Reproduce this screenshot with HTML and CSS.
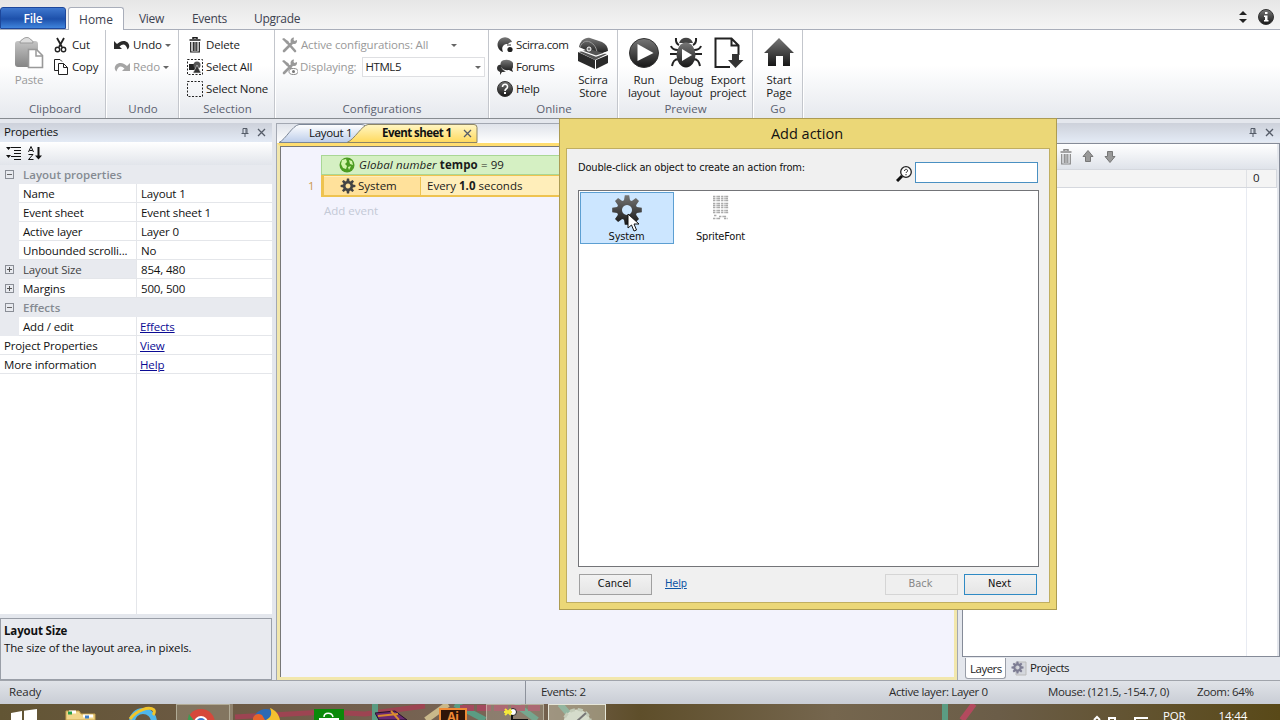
FILE: index.html
```
<!DOCTYPE html>
<html lang="en">

<head>
    <meta charset="UTF-8">
    <meta name="viewport" content="width=device-width, initial-scale=1.0">
    <title>Event sheet 1</title>
    <link rel="stylesheet" href="styles.css">
</head>

<body>
    <!-- shared icons -->
    <svg class="defs" width="0" height="0">
        <defs>
            <linearGradient id="dark" x1="0" y1="0" x2="0" y2="1">
                <stop offset="0" stop-color="#777" />
                <stop offset="1" stop-color="#161616" />
            </linearGradient>
            <linearGradient id="grey" x1="0" y1="0" x2="0" y2="1">
                <stop offset="0" stop-color="#c4c4c4" />
                <stop offset="1" stop-color="#858585" />
            </linearGradient>
            <linearGradient id="tabBlue" x1="0" y1="0" x2="0" y2="1">
                <stop offset="0" stop-color="#fff" />
                <stop offset="1" stop-color="#bccdea" />
            </linearGradient>
            <linearGradient id="tabYellow" x1="0" y1="0" x2="0" y2="1">
                <stop offset="0" stop-color="#fff6c4" />
                <stop offset="1" stop-color="#ffd95c" />
            </linearGradient>
            <symbol id="gear" viewBox="0 0 32 32">
                <path fill-rule="evenodd" d="M13 6.200L13.800 1.200H18.200L19 6.200 20.800 6.950 24.900 4 28 7.100 25.050 11.200 25.800 13 30.800 13.800V18.200L25.800 19 25.050 20.800 28 24.900 24.900 28 20.800 25.050 19 25.800 18.200 30.800H13.800L13 25.800 11.200 25.050 7.100 28 4 24.900 6.950 20.800 6.200 19 1.200 18.200V13.800L6.200 13 6.950 11.200 4 7.100 7.100 4 11.200 6.950ZM16 11a5 5 0 1 0 .01 0z" />
            </symbol>
            <symbol id="trash" viewBox="0 0 12 16">
                <path d="M4 2V.7h4V2M.5 3h11" fill="none" stroke="currentColor" stroke-width="1.5" />
                <path d="M1.700 5v10h8.600V5M4.300 5v9M6 5v9M7.800 5v9" fill="none" stroke="currentColor" stroke-width="1.200" />
            </symbol>
            <symbol id="tools" viewBox="0 0 16 16">
                <path d="M2 14L11 5M5 5l8 9" stroke="#999" stroke-width="2.600" stroke-linecap="round" />
                <path d="M15 3a3.300 3.300 0 1 1-3-2.500L11.500 3l1 1zM0 2l2-1 5 4-2 2z" fill="#999" />
            </symbol>
            <symbol id="pin" viewBox="0 0 8 9">
                <path d="M2 .5h4v5H2zM5 .5v5M.5 5.500h7M4 6v3" fill="none" stroke="#555c68" />
            </symbol>
            <symbol id="close" viewBox="0 0 9 9">
                <path d="M1 1l7 7M8 1L1 8" stroke="#555c68" stroke-width="1.300" />
            </symbol>
        </defs>
    </svg>

    <nav class="tabs">
        <span class="tabs__item tabs__item--file">File</span>
        <span class="tabs__item tabs__item--active">Home</span>
        <span class="tabs__item tabs__item--view">View</span>
        <span class="tabs__item tabs__item--events">Events</span>
        <span class="tabs__item">Upgrade</span>
        <div class="tabs__tools">
            <svg width="8" height="12"><path d="M0 4L4 0l4 4zM0 8l4 4 4-4z" fill="#222" /></svg>
            <svg width="16" height="16"><circle cx="8" cy="8" r="7.500" fill="url(#dark)" stroke="#333" /><path d="M7 3h2.500v2H7zM6 6.500h3.500V11h1v1.500H6V11h1V8H6z" fill="#fff" /></svg>
        </div>
    </nav>

    <header class="ribbon">
        <section class="group group--clipboard">
            <div class="group__body">
                <div class="big big--paste">
                    <svg width="30" height="32">
                        <rect x="1" y="4" width="23" height="26" rx="3" fill="url(#grey)" />
                        <path d="M6 6c0-3 2-3 3-4 2-2 6-2 7 0 1 1 3 1 3 4z" fill="#ddd" stroke="#999" />
                        <path d="M14.500 12.500h8l6 6v12h-14z" fill="#fff" stroke="#999" stroke-width="1.600" />
                        <path d="M22 13v6h6" fill="none" stroke="#999" stroke-width="1.500" />
                    </svg>
                    <span>Paste</span>
                </div>
                <div class="stack">
                    <div class="small">
                        <svg width="16" height="16"><path d="M4 1l5 9M11 1L6 10" stroke="#222" stroke-width="1.800" /><g fill="none" stroke="#222" stroke-width="1.400"><circle cx="4.500" cy="12.500" r="2.200" /><circle cx="10.500" cy="12.500" r="2.200" /></g></svg>
                        <span>Cut</span>
                    </div>
                    <div class="small">
                        <svg width="16" height="16"><path d="M1.500 11.500v-11H7l2 2M1.500 11.500H5" fill="none" stroke="#222" /><path d="M5.500 4.500h5l4 4v7h-9zM10.500 4.500v4h4" fill="#fff" stroke="#222" /></svg>
                        <span>Copy</span>
                    </div>
                </div>
            </div>
            <div class="group__caption">Clipboard</div>
        </section>

        <section class="group group--undo">
            <div class="group__body">
                <div class="stack">
                    <div class="small">
                        <svg width="16" height="12"><path d="M0 2v8h8L5.500 7.500C9 4 12 5 13.500 10.500 17 8 15 2 9.500 2 7 2 4.500 3.500 3 5z" fill="#2a2a2a" /></svg>
                        <span>Undo</span><i class="arrow"></i>
                    </div>
                    <div class="small small--off">
                        <svg width="16" height="12"><path d="M16 2v8H8l2.500-2.500C7 4 4 5 2.500 10.500-1 8 1 2 6.500 2 9 2 11.500 3.500 13 5z" fill="#a5a5a5" /></svg>
                        <span>Redo</span><i class="arrow"></i>
                    </div>
                </div>
            </div>
            <div class="group__caption">Undo</div>
        </section>

        <section class="group group--selection">
            <div class="group__body">
                <div class="stack">
                    <div class="small">
                        <svg width="16" height="16"><use href="#trash" x="2" width="12" height="16" /></svg>
                        <span>Delete</span>
                    </div>
                    <div class="small">
                        <svg width="16" height="16"><path d="M.5.5h15v15H.5z" fill="none" stroke="#222" stroke-dasharray="2 1.500" /><path d="M2 5h6v6H2z" fill="#222" /><circle cx="10" cy="6" r="3.500" fill="#555" /><path d="M10 6l4 8H6z" fill="#333" stroke="#ddd" stroke-width=".6" /></svg>
                        <span>Select All</span>
                    </div>
                    <div class="small">
                        <svg width="16" height="16"><path d="M.5.5h15v15H.5z" fill="none" stroke="#222" stroke-dasharray="2 1.500" /></svg>
                        <span>Select None</span>
                    </div>
                </div>
            </div>
            <div class="group__caption">Selection</div>
        </section>

        <section class="group group--config">
            <div class="group__body">
                <div class="stack">
                    <div class="small small--off">
                        <svg width="16" height="16"><use href="#tools" /></svg>
                        <span>Active configurations: All</span><i class="arrow arrow--config"></i>
                    </div>
                    <div class="small small--off small--display">
                        <svg width="16" height="16"><use href="#tools" /><ellipse cx="11.500" cy="12.500" rx="4.500" ry="3" fill="#fff" stroke="#888" /><circle cx="11.500" cy="12.500" r="1.500" fill="#777" /></svg>
                        <span>Displaying:</span>
                        <div class="combo"><span>HTML5</span><i class="arrow"></i></div>
                    </div>
                </div>
            </div>
            <div class="group__caption">Configurations</div>
        </section>

        <section class="group group--online">
            <div class="group__body">
                <div class="stack">
                    <div class="small">
                        <svg width="16" height="16"><path d="M15 5A7.500 7.500 0 1 0 6 15c-2-4 0-8 4-8 2 0 2-2 5-2z" fill="url(#dark)" /><circle cx="13" cy="12.500" r="2.600" fill="#222" /><path d="M14 8H10" stroke="#333" /></svg>
                        <span>Scirra.com</span>
                    </div>
                    <div class="small">
                        <svg width="16" height="16"><path d="M4 3c2-3 10-3 12 1 1 4-1 6-1 6l1 3-4-2c-6 1-10-3-8-8z" fill="url(#dark)" /><path d="M0 9c0-3 3-4 4-3 0 4 3 6 5 6-1 1-3 1-4 1l-2 3v-3c-2-1-3-2-3-4z" fill="#333" /></svg>
                        <span>Forums</span>
                    </div>
                    <div class="small">
                        <svg width="16" height="16"><circle cx="8" cy="8" r="7.500" fill="url(#dark)" stroke="#333" /><path d="M5.500 6c0-4 5.500-3.500 5 0 0 2-2.500 1.500-2.500 4" fill="none" stroke="#fff" stroke-width="1.600" /><path d="M7 11h2v2H7z" fill="#fff" /></svg>
                        <span>Help</span>
                    </div>
                </div>
                <div class="big big--store">
                    <svg width="32" height="32"><path d="M2 10C3 4 8 0 13 1l12 4c4 2 6 5 6 9l-11 4z" fill="url(#dark)" /><path d="M3 10C5 5 9 3 13 5c4 2 7 6 7 12" fill="none" stroke="#999" /><path d="M1 15l17 8v9L1 24zM31 18v8l-12 6v-9z" fill="#2a2a2a" /><path d="M2 15l10-3 18 5-12 6z" fill="#555" /><path d="M1 12.500l18 6.500 12-4" fill="none" stroke="#fff" stroke-width="1.300" /><circle cx="12" cy="12" r="2" fill="#777" stroke="#fff" /></svg>
                    <span>Scirra<br>Store</span>
                </div>
            </div>
            <div class="group__caption">Online</div>
        </section>

        <section class="group group--preview">
            <div class="group__body">
                <div class="big">
                    <svg width="32" height="32"><circle cx="16" cy="16" r="14.500" fill="url(#dark)" stroke="#333" /><path d="M9.500 7l16 9-16 8z" fill="#fff" /></svg>
                    <span>Run<br>layout</span>
                </div>
                <div class="big">
                    <svg width="32" height="32"><path d="M9 8C5 6 6 3 6 1M23 8c4-2 3-5 3-7M8 13c-4 0-6-1-7-4M24 13c4 0 6-1 7-4M8 17H0M24 17h8M9 22c-5 0-6 3-7 7M23 22c5 0 6 3 7 7" fill="none" stroke="#222" stroke-width="2" /><path d="M9 6c2-7 12-7 14 0z" fill="#444" /><ellipse cx="16" cy="18" rx="9.500" ry="12.500" fill="url(#dark)" /><path d="M12 12l10 6-10 6z" fill="#fff" /></svg>
                    <span>Debug<br>layout</span>
                </div>
                <div class="big">
                    <svg width="32" height="32"><path d="M18 30H3.500V1.500h16l7 7V18M19.500 2v6.500h7" fill="none" stroke="#222" stroke-width="2" /><path d="M20 17h7v6h4.500L23.500 31 16 23h4z" fill="#333" /></svg>
                    <span>Export<br>project</span>
                </div>
            </div>
            <div class="group__caption">Preview</div>
        </section>

        <section class="group group--go">
            <div class="group__body">
                <div class="big">
                    <svg width="32" height="32"><path d="M16 1l15 15h-4v13h-7V19h-7v10H5V16H1z" fill="url(#dark)" /></svg>
                    <span>Start<br>Page</span>
                </div>
            </div>
            <div class="group__caption">Go</div>
        </section>
    </header>

    <main class="workspace">
        <aside class="properties">
            <div class="panel-title">
                <span>Properties</span>
                <svg width="8" height="9"><use href="#pin" /></svg>
                <svg width="9" height="9"><use href="#close" /></svg>
            </div>
            <div class="properties__toolbar">
                <svg width="15" height="15"><path d="M0 1h5L2.500 4zM0 9h5l-2.500 3z" fill="#111" /><path d="M5 1.500h10M8 4.500h7M8 7.500h7M5 10.500h10M8 13.500h7" stroke="#111" /></svg>
                <svg width="14" height="15"><path d="M.5 6L3 .5 5.500 6M1.500 4.500h3M.5 8.500h4.500l-4.500 5h5" fill="none" stroke="#111" /><path d="M10.500 1v11" stroke="#111" stroke-width="2" /><path d="M7 9.500h7l-3.500 4z" fill="#111" /></svg>
            </div>
            <div class="grid">
                <div class="grid__head"><i class="toggle"></i>Layout properties</div>
                <div class="grid__row"><i></i><span>Name</span><b>Layout 1</b></div>
                <div class="grid__row"><i></i><span>Event sheet</span><b>Event sheet 1</b></div>
                <div class="grid__row"><i></i><span>Active layer</span><b>Layer 0</b></div>
                <div class="grid__row"><i></i><span>Unbounded scrolli...</span><b>No</b></div>
                <div class="grid__row grid__row--selected"><i class="toggle toggle--plus"></i><span>Layout Size</span><b>854, 480</b></div>
                <div class="grid__row"><i class="toggle toggle--plus"></i><span>Margins</span><b>500, 500</b></div>
                <div class="grid__head"><i class="toggle"></i>Effects</div>
                <div class="grid__row"><i></i><span>Add / edit</span><a>Effects</a></div>
                <div class="grid__row grid__row--wide"><span>Project Properties</span><a>View</a></div>
                <div class="grid__row grid__row--wide"><span>More information</span><a>Help</a></div>
                <div class="grid__rest"></div>
            </div>
            <div class="description">
                <strong>Layout Size</strong>
                <p>The size of the layout area, in pixels.</p>
            </div>
        </aside>

        <section class="editor">
            <div class="editor__tabs">
                <div class="doc-tab">
                    <svg class="doc-tab__shape" width="92" height="19"><path d="M1 18.500C8 15 14 2 21 .5h62c4 0 5 2 7 5v13z" fill="url(#tabBlue)" stroke="#7c8798" /></svg>
                    <span>Layout 1</span>
                </div>
                <div class="doc-tab doc-tab--active">
                    <svg class="doc-tab__shape" width="131" height="19"><path d="M0 18.500C8 15 14 2 21 .5h106q3 0 3 3v15z" fill="url(#tabYellow)" stroke="#8c8566" /></svg>
                    <span>Event sheet 1</span>
                    <svg width="9" height="9"><use href="#close" /></svg>
                </div>
            </div>
            <div class="sheet">
                <div class="event event--global">
                    <svg width="16" height="16"><circle cx="8" cy="8" r="7.500" fill="#4c9c22" /><path d="M3 3l4-1 1 3-2 2 2 2-1 3-3-1-2-4zM10 3l3 1 1 4-3-1zM9 10l3-1-2 4z" fill="#d3f5ac" /></svg>
                    <span><em>Global number</em> <strong>tempo</strong> = 99</span>
                </div>
                <div class="event-line">
                    <span class="event-line__number">1</span>
                    <div class="event event--system">
                        <div class="event__object">
                            <svg width="16" height="16" fill="#444"><use href="#gear" /></svg>
                            <span>System</span>
                        </div>
                        <div class="event__text">Every <strong>1.0</strong> seconds</div>
                    </div>
                </div>
                <div class="add-event">Add event</div>
            </div>
        </section>

        <aside class="layers">
            <div class="panel-title">
                <span></span>
                <svg width="8" height="9"><use href="#pin" /></svg>
                <svg width="9" height="9"><use href="#close" /></svg>
            </div>
            <div class="layers__box">
                <div class="layers__toolbar">
                    <svg class="layers__trash" width="12" height="16"><use href="#trash" /></svg>
                    <svg width="12" height="13"><path d="M6 .5L11 6.500H8.500v5h-5v-5H1z" fill="#999" stroke="#777" /></svg>
                    <svg width="12" height="13"><path d="M6 12.500L1 6.500h2.500v-5h5v5H11z" fill="#999" stroke="#777" /></svg>
                </div>
                <div class="layers__row"><span>0</span></div>
                <div class="layers__rest"></div>
            </div>
            <div class="layers__tabs">
                <span class="layers__tab">Layers</span>
                <svg width="16" height="16"><path d="M5 2h10v13H5z" fill="#d4d7dd" stroke="#bbb" /><use href="#gear" y="1" width="13" height="13" fill="#7d7d94" /></svg>
                <span>Projects</span>
            </div>
        </aside>
    </main>

    <footer class="status">
        <span class="status__ready">Ready</span>
        <span class="status__events">Events: 2</span>
        <span class="status__layer">Active layer: Layer 0</span>
        <span class="status__mouse">Mouse: (121.5, -154.7, 0)</span>
        <span class="status__zoom">Zoom: 64%</span>
    </footer>

    <div class="taskbar">
        <svg class="taskbar__art" width="1280" height="16">
            <path d="M235 13l90-5 40 2 60-8" fill="none" stroke="#9d4452" stroke-width="5" />
            <path d="M455 0l30 16M375 0v16M945 0v16M515 0l22 16M560 0l14 16" stroke="#5b9c83" stroke-width="6" />
            <path d="M448 0l-22 16" stroke="#c9b88a" stroke-width="6" />
            <path d="M460 4h80" stroke="#a34a5e" stroke-width="6" stroke-dasharray="14 3" />
            <path d="M974 0l-12 16" stroke="#b34a5e" stroke-width="6" />
        </svg>
        <div class="task task--start"><svg width="28" height="16"><path d="M0 9l11-2v9H0zM13 6.700L26 5v11H13z" fill="#fff" /></svg></div>
        <div class="task"><svg width="32" height="16"><path d="M1 7h13l2 3h14v6H1z" fill="#f1d58a" stroke="#c9a44e" /><path d="M4 8h7M18 12h10" stroke="#fff" stroke-width="3" /><path d="M3 9h4" stroke="#2a9d46" stroke-width="3" /><path d="M20 13h4" stroke="#3f7fc8" stroke-width="3" /></svg></div>
        <div class="task"><svg width="32" height="16"><path d="M5 18a11 11 0 0 1 22 0" fill="none" stroke="#4fb7ea" stroke-width="6" /><path d="M3 15C10 6 22 2 27 6c1 1 0 4-1 5" fill="none" stroke="#f1c52a" stroke-width="3" /></svg></div>
        <div class="task task--open task--group"><svg width="32" height="16"><circle cx="14" cy="18" r="14" fill="#d6483b" /><path d="M2 9l6 8H0z" fill="#3e9b54" /><circle cx="14" cy="18" r="7" fill="#fff" /><circle cx="14" cy="18" r="5" fill="#3f78d0" /></svg></div>
        <div class="task"><svg width="32" height="16"><circle cx="15" cy="18" r="13" fill="#2d6ab4" /><path d="M19 4c5 2 9 6 10 12H15c6-3 6-7 4-12z" fill="#f5c12f" /><path d="M2 14c2-4 5-5 9-3l3 5H2z" fill="#e8632a" /></svg></div>
        <div class="task"><svg width="30" height="16"><path d="M0 5h30v11H0z" fill="#0a8a0a" /><path d="M5 14h20v2H5z" fill="#fff" /><path d="M10 13c0-5 8-5 9 0" fill="none" stroke="#fff" stroke-width="1.500" /></svg></div>
        <div class="task"><svg width="32" height="16"><path d="M0 9l20-2 12 9H4z" fill="#6a2a72" stroke="#26102a" /><path d="M3 12l20-2M16 7l8 9" stroke="#d98b2f" stroke-width="2" /></svg></div>
        <div class="task"><div class="task__ai">Ai</div></div>
        <div class="task task--open"><svg width="32" height="16"><circle cx="14" cy="7" r="3.500" fill="#fff" stroke="#222" /><path d="M6 4l6 6M6 10l6-6M5 7h8" stroke="#f6e93a" stroke-width="2" /><path d="M13 10v5h16" fill="none" stroke="#111" stroke-width="2" /></svg></div>
        <div class="task task--open task--current"><svg width="32" height="16" fill="#d5dccb"><circle cx="16" cy="18" r="13.500" stroke="#c3cbb8" stroke-width="3" stroke-dasharray="5 3" /><path d="M15 17l10-9" stroke="#777" stroke-width="2" /></svg></div>
        <div class="tray">
            <svg width="60" height="16"><path d="M6 16l3-3 3 3M21 16v-2h6v2M47 16v-2h13" fill="none" stroke="#fff" stroke-width="2" /></svg>
            <span>POR</span>
            <span class="tray__time">14:44</span>
        </div>
    </div>

    <div class="dialog">
        <div class="dialog__title">Add action</div>
        <div class="dialog__body">
            <div class="dialog__top">
                <span>Double-click an object to create an action from:</span>
                <svg width="16" height="16"><circle cx="10" cy="6" r="5.300" fill="#fff" stroke="#222" stroke-width="1.300" /><path d="M6 10l-5 5" stroke="#111" stroke-width="3" /><path d="M8.500 5c0-2.500 3.500-2 3 0 0 1-1.500 1-1.500 2M10 8v1.300" fill="none" stroke="#222" /></svg>
                <input class="dialog__search" type="text">
            </div>
            <div class="objects">
                <div class="object object--selected">
                    <svg width="32" height="32" fill="url(#dark)"><use href="#gear" /></svg>
                    <span>System</span>
                    <svg class="cursor" width="13" height="19"><path d="M1 1v14l3.500-3 2.500 6 2.500-1-2.500-6h5z" fill="#fff" stroke="#111" /></svg>
                </div>
                <div class="object">
                    <svg width="32" height="32"><path d="M8 2.500h16M8 4.500h15M8 6.500h16M8 9.500h16M8 11.500h15M8 13.500h16M8 16.500h15M8 18.500h16M9 21.500h3M14 22.500h8M8 24.500h8M19 24.500h4" stroke="#aaa" stroke-width="1.500" stroke-dasharray="2 .6 1 .5 3 1" /></svg>
                    <span>SpriteFont</span>
                </div>
            </div>
            <div class="dialog__buttons">
                <button class="button">Cancel</button>
                <a class="dialog__help">Help</a>
                <button class="button button--back" disabled>Back</button>
                <button class="button button--default">Next</button>
            </div>
        </div>
    </div>
</body>

</html>
```

FILE: styles.css
```
:root {
    --color-chrome: #e4e7ed;
    --color-line: #8f949e;
    --color-text: #1b1b1b;
    --color-muted: #999;
    --color-dialog: #ebd777;
}

* {
    box-sizing: border-box;
}

body {
    position: relative;
    display: flex;
    flex-direction: column;
    width: 1280px;
    height: 720px;
    margin: 0;
    overflow: hidden;
    background-color: var(--color-chrome);
    color: var(--color-text);
    font-family: "Open Sans", "Noto Sans", sans-serif;
    font-size: 11.5px;
    line-height: 16px;
    letter-spacing: -0.15px;
    white-space: nowrap;
}

svg {
    display: block;
    flex: none;
}

.defs {
    position: absolute;
}

/* ribbon tabs */
.tabs {
    display: flex;
    flex: none;
    height: 30px;
    padding-top: 7px;
    background: linear-gradient(#e6e6e6, #f5f5f5);
    border-bottom: 1px solid #a9aeba;
    color: #3d4250;
    font-size: 12px;
    letter-spacing: -0.3px;
}

.tabs__item {
    height: 23px;
    line-height: 24px;
}

.tabs__item--file {
    width: 66px;
    height: 22px;
    margin-right: 2px;
    line-height: 21px;
    text-align: center;
    color: #fff;
    font-weight: 600;
    background: linear-gradient(#3f78cf, #1d50aa 55%, #3f84dc);
    border: 1px solid #1d479b;
    border-radius: 3px 3px 0 0;
}

.tabs__item--active {
    width: 56px;
    text-align: center;
    background-color: #fff;
    border: 1px solid #a9aeba;
    border-bottom: 0;
    border-radius: 3px 3px 0 0;
    line-height: 23px;
    letter-spacing: 0;
}

.tabs__item--view {
    width: 53px;
    padding-left: 15px;
}

.tabs__item--events {
    width: 77px;
    padding-left: 15px;
}

.tabs__tools {
    display: flex;
    align-items: center;
    gap: 11px;
    height: 20px;
    margin-left: auto;
    padding-right: 6px;
}

/* ribbon */
.ribbon {
    display: flex;
    flex: none;
    height: 89px;
    background: linear-gradient(#fff 40%, #e6e9ee);
    border-bottom: 1px solid #868b90;
}

.group {
    display: flex;
    flex-direction: column;
    padding-top: 4px;
    border-right: 1px solid #c3c6cc;
    box-shadow: 1px 0 #fff;
}

.group__body {
    display: flex;
    height: 66px;
}

.group__caption {
    text-align: center;
    color: #5b6170;
    line-height: 18px;
    letter-spacing: 0;
}

.group--clipboard { width: 106px; padding-left: 5px; }
.group--undo { width: 73px; padding-left: 8px; }
.group--selection { width: 96px; padding-left: 8px; }
.group--config { width: 214px; padding-left: 7px; }
.group--online { width: 129px; padding-left: 8px; }
.group--preview { width: 135px; padding-left: 5px; }
.group--go { width: 50px; padding-left: 5px; }

.group--undo .group__caption,
.group--selection .group__caption,
.group--config .group__caption,
.group--online .group__caption {
    margin-left: -6px;
}

.group--preview .group__caption,
.group--go .group__caption {
    margin-left: -4px;
}

.small {
    display: flex;
    align-items: center;
    gap: 3px;
    height: 22px;
}

.group--online .small {
    letter-spacing: -0.4px;
}

.small--off,
.big--paste {
    color: var(--color-muted);
}

.big {
    display: flex;
    flex-direction: column;
    align-items: center;
    width: 42px;
    padding-top: 3px;
    text-align: center;
    line-height: 13px;
}

.big span {
    padding-top: 4px;
}

.big--paste {
    width: 48px;
}

.big--store {
    width: 44px;
    margin-left: auto;
    margin-right: 2px;
}

.arrow {
    border: 3px solid transparent;
    border-top-color: #666;
    border-bottom: 0;
}

.arrow--config {
    margin-left: 20px;
}

.small--display {
    gap: 2px;
}

.combo {
    display: flex;
    align-items: center;
    justify-content: space-between;
    width: 123px;
    height: 20px;
    margin-left: 4px;
    padding: 0 3px 0 2px;
    border: 1px solid #dedfe2;
    background-color: #fff;
    color: #222;
    letter-spacing: -0.4px;
}

/* workspace */
.workspace {
    display: grid;
    grid-template-columns: 272px 682px 318px;
    grid-template-rows: 100%;
    column-gap: 4px;
    flex: none;
    height: 561px;
    padding-top: 4px;
}

.panel-title {
    display: flex;
    align-items: center;
    gap: 8px;
    flex: none;
    height: 19px;
    padding: 0 6px 1px 4px;
    background: linear-gradient(#cdd1da, #e3eaf5);
}

.panel-title span {
    flex: 1;
}

.properties {
    display: flex;
    flex-direction: column;
    min-height: 0;
    color: #111;
}

.properties__toolbar {
    display: flex;
    align-items: center;
    gap: 7px;
    flex: none;
    height: 23px;
    padding-left: 6px;
    background: linear-gradient(#fff, #e2e5eb);
}

.grid {
    display: flex;
    flex-direction: column;
    flex: 1;
}

.grid__head {
    display: flex;
    align-items: center;
    height: 19px;
    background-color: #e8eaef;
    color: #858a92;
    font-weight: 600;
    letter-spacing: 0;
}

.grid__row {
    display: grid;
    grid-template-columns: 19px 117px 1fr;
    height: 19px;
    background-color: #e8eaef;
    line-height: 20px;
}

.grid__row > i {
    height: 18px;
}

.grid__row span,
.grid__row b,
.grid__row a {
    height: 19px;
    padding-left: 4px;
    background-color: #fff;
    border-bottom: 1px solid #e4e6ea;
    font-weight: normal;
}

.grid__row b,
.grid__row a {
    border-left: 1px solid #e4e6ea;
}

.grid__row a {
    padding-left: 3px;
    color: #0b0b94;
    text-decoration: underline;
}

.grid__row--wide {
    grid-template-columns: 136px 1fr;
}

.grid__row--selected span {
    background-color: #e8eaef;
    color: #444;
}

.toggle {
    width: 9px;
    height: 9px;
    margin: 0 9px 0 5px;
    background: linear-gradient(#666, #666) center / 5px 1px no-repeat;
    border: 1px solid #8a8e96;
}

.grid__row > .toggle {
    height: 9px;
    margin-top: 5px;
}

.toggle--plus {
    background: linear-gradient(#555, #555) center / 5px 1px no-repeat, linear-gradient(#555, #555) center / 1px 5px no-repeat;
}

.grid__rest {
    flex: 1;
    background: linear-gradient(90deg, #fff 136px, #e4e6ea 136px, #e4e6ea 137px, #fff 137px);
}

.description {
    height: 62px;
    margin-top: 4px;
    padding: 3px;
    background-color: #e8eaef;
    border: 1px solid #9a9fa8;
    line-height: 17px;
}

.description p {
    margin: 0;
}

/* editor */
.editor {
    display: flex;
    flex-direction: column;
    min-height: 0;
    border: 1px solid #a3a8b2;
    border-bottom: 0;
}

.editor__tabs {
    display: flex;
    flex: none;
    height: 19px;
    padding-left: 1px;
    background: linear-gradient(#dfe3ea, #fff);
}

.doc-tab {
    position: relative;
    display: flex;
    align-items: center;
    width: 69px;
    height: 19px;
    padding: 0 0 1px 31px;
    color: #111;
    letter-spacing: -0.3px;
}

.doc-tab__shape {
    position: absolute;
    top: 0;
    left: 0;
}

.doc-tab span,
.doc-tab__shape + span + svg {
    position: relative;
}

.doc-tab--active {
    width: 131px;
    padding-left: 35px;
    gap: 11px;
    font-weight: 700;
    letter-spacing: -0.55px;
}

.sheet {
    flex: 1;
    padding: 9px 0 0 40px;
    background-color: #f3f3fd;
    border: 3px solid #f2e7ad;
    border-top-color: #ffdd70;
    box-shadow: inset 1px 1px #777;
    letter-spacing: 0;
}

.event {
    display: flex;
    align-items: center;
}

.event--global {
    height: 20px;
    margin-left: 1px;
    padding-left: 17px;
    gap: 4px;
    background-color: #d5f0c3;
    border: 1px solid #a9d795;
    letter-spacing: 0.1px;
}

.event-line {
    position: relative;
    height: 22px;
    padding-left: 1px;
}

.event-line__number {
    position: absolute;
    left: -12px;
    line-height: 22px;
    color: #cc9a4c;
}

.event--system {
    height: 22px;
    background-color: #ffeeba;
    border: 1px solid #eec350;
    border-left-width: 3px;
    border-bottom-width: 2px;
}

.event__object {
    display: flex;
    align-items: center;
    gap: 2px;
    width: 97px;
    height: 18px;
    padding-left: 16px;
    background-color: #ffe19b;
    border-right: 1px solid #eec350;
}

.event__text {
    padding-left: 6px;
}

.add-event {
    padding: 6px 0 0 4px;
    color: #c3c9d6;
}

/* layers */
.layers {
    display: flex;
    flex-direction: column;
    min-height: 0;
}

.layers__box {
    display: flex;
    flex: 1;
    flex-direction: column;
    margin-top: 1px;
    padding-right: 2px;
    border: 1px solid #858b98;
}

.layers__toolbar {
    display: flex;
    align-items: center;
    gap: 10px;
    height: 25px;
    padding-left: 97px;
    background: linear-gradient(#fff, #dfe3ea);
}

.layers__trash {
    color: #888;
}

.layers__row {
    display: flex;
    justify-content: flex-end;
    height: 19px;
    background-color: #f4f4f4;
    border: 1px solid #d5d8de;
}

.layers__row span {
    width: 30px;
    padding-left: 6px;
    border-left: 1px solid #dfe1e5;
}

.layers__rest {
    flex: 1;
    background: linear-gradient(270deg, #fff 30px, #e8ebf2 30px, #e8ebf2 31px, #fff 31px);
}

.layers__tabs {
    display: flex;
    align-items: center;
    gap: 3px;
    height: 23px;
    padding: 0 0 1px 3px;
    letter-spacing: -0.5px;
}

.layers__tab {
    width: 41px;
    height: 21px;
    margin-right: 2px;
    padding: 0 0 0 4px;
    background-color: #fff;
    border: 1px solid #999ea8;
    border-top: 0;
    border-radius: 0 0 3px 3px;
    line-height: 22px;
}

/* status bar */
.status {
    display: flex;
    flex: none;
    height: 24px;
    border-top: 1px solid #a0a4ab;
    background: linear-gradient(#e0e3e8, #c9cdd5);
    line-height: 21px;
    letter-spacing: -0.35px;
    color: #2b2b2b;
}

.status__ready {
    width: 526px;
    padding-left: 9px;
    border-right: 1px solid #8d929c;
    letter-spacing: -0.1px;
}

.status__events { width: 363px; padding-left: 15px; }
.status__layer { width: 159px; }
.status__mouse { width: 149px; }

/* taskbar */
.taskbar {
    position: relative;
    display: flex;
    flex: none;
    height: 16px;
    overflow: hidden;
    background: linear-gradient(90deg, #625534, #6b5942 15%, #7a6658 40%, #5e4e2a 50%, #75664e 65%, #6b5d48 78%, #594918);
}

.taskbar__art {
    position: absolute;
    top: 0;
    left: 0;
}

.task {
    position: relative;
    display: flex;
    justify-content: center;
    width: 58px;
    height: 18px;
    margin: 0 2px;
}

.task--start {
    width: 46px;
}

.task--open {
    background-color: rgba(200, 200, 180, 0.25);
    border: 1px solid rgba(225, 225, 205, 0.5);
}

.task--group {
    width: 54px;
    margin: 0 6px 0 2px;
    box-shadow: 3px 0 rgba(225, 225, 205, 0.3);
}

.task--current {
    background-color: rgba(215, 215, 195, 0.45);
    border-color: #e6e6d8;
}

.task__ai {
    width: 28px;
    height: 24px;
    margin-top: 4px;
    border: 2px solid #f08a35;
    background-color: #301508;
    color: #f08a35;
    font-size: 12px;
    font-weight: 700;
    text-align: center;
    line-height: 14px;
}

.tray {
    position: relative;
    display: flex;
    width: 192px;
    margin-left: auto;
    color: #fff;
    line-height: 24px;
}

.tray > span {
    margin-left: 15px;
}

.tray > .tray__time {
    margin-left: 33px;
}

/* add action dialog */
.dialog {
    position: absolute;
    left: 559px;
    top: 118px;
    width: 498px;
    height: 492px;
    padding: 0 6px;
    background-color: var(--color-dialog);
    border: 1px solid #ad9c52;
    font-family: "DejaVu Sans Condensed", "Open Sans", sans-serif;
    font-size: 11px;
    letter-spacing: -0.19px;
    color: #111;
}

.dialog__title {
    height: 29px;
    padding-right: 2px;
    text-align: center;
    font-family: "Open Sans", sans-serif;
    font-size: 14.5px;
    line-height: 30px;
    letter-spacing: 0;
}

.dialog__body {
    height: 455px;
    padding: 10px 10px 0 11px;
    background-color: #f0f0f0;
    border: 1px solid #c0ae61;
}

.dialog__top {
    display: flex;
    height: 31px;
}

.dialog__top span {
    flex: 1;
    padding-top: 1px;
}

.dialog__top svg {
    margin: 7px 3px 0 0;
}

.dialog__search {
    width: 123px;
    height: 21px;
    margin: 3px 1px 0 0;
    background-color: #fff;
    border: 1px solid #4a90c2;
}

.objects {
    display: flex;
    height: 377px;
    padding: 1px;
    background-color: #fff;
    border: 1px solid #737478;
}

.object {
    position: relative;
    display: flex;
    flex-direction: column;
    align-items: center;
    gap: 2px;
    width: 94px;
    height: 52px;
    padding: 1px 1px 0 0;
    border: 1px solid transparent;
    line-height: 18px;
}

.object--selected {
    background-color: #cce6ff;
    border-color: #5c9fd2;
}

.cursor {
    position: absolute;
    left: 46px;
    top: 20px;
}

.dialog__buttons {
    display: flex;
    align-items: center;
    height: 34px;
}

.button {
    width: 73px;
    height: 21px;
    margin-left: 1px;
    padding: 0 2px 0 0;
    background: linear-gradient(#f2f2f2, #e5e5e5);
    border: 1px solid #a0a0a0;
    color: #111;
    font: inherit;
}

.button--back {
    margin: 0 6px 0 auto;
    background: #efefef;
    border-color: #d5d5d5;
    color: #888;
}

.button--default {
    margin: 0 2px 0 0;
    border-color: #2f8ac4;
}

.dialog__help {
    margin-left: 13px;
    color: #0f55a5;
    text-decoration: underline;
}
```
